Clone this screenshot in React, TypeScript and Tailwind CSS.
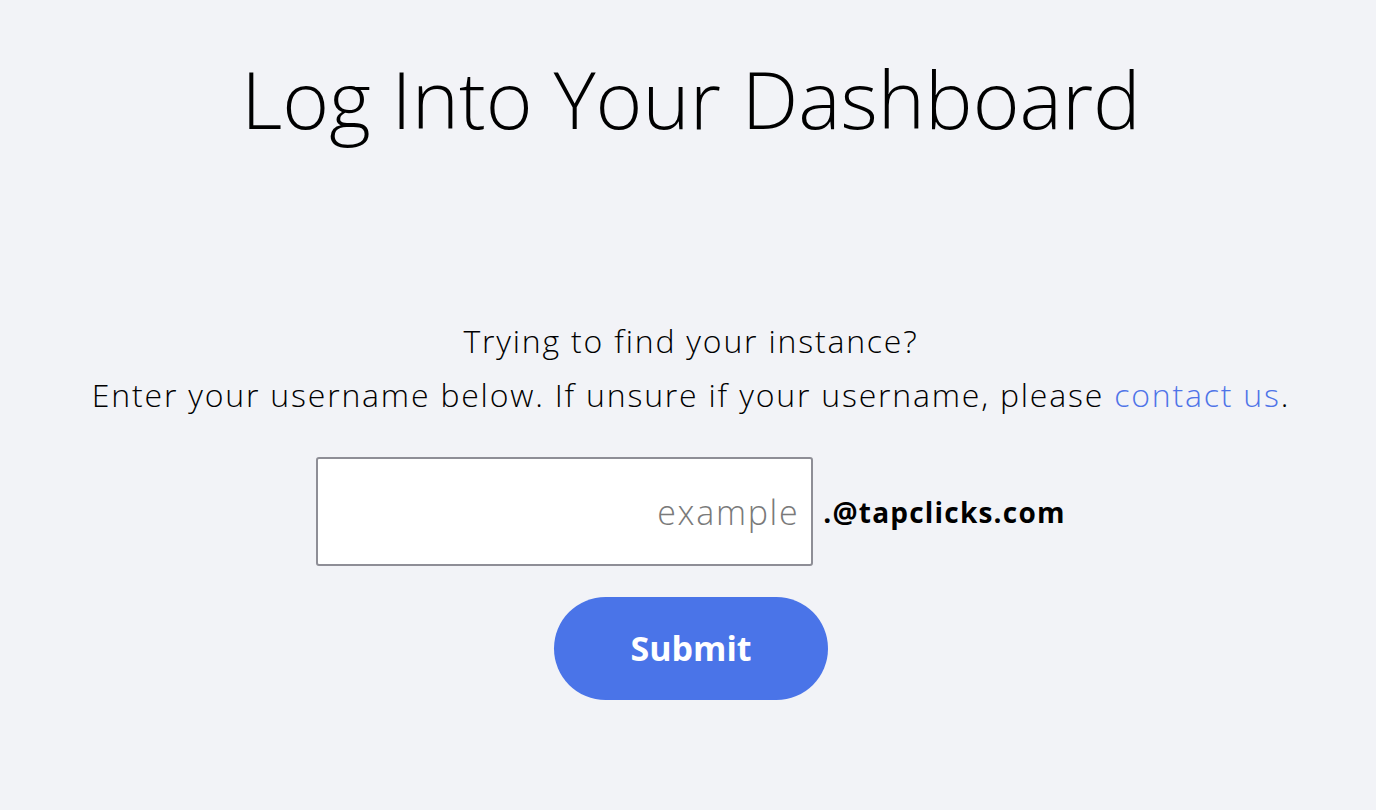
export default function App() {
  return (
    <div className="min-h-[810px] w-full bg-[#f2f3f7] pl-[6px] font-['Open_Sans',_'Noto_Sans',_sans-serif] text-black">
      <div className="flex flex-col items-center">
        <h1 className="mt-[50px] text-[80px] font-light leading-[96px]">Log Into Your Dashboard</h1>

        <div className="mt-[168px] flex flex-col items-center text-[32px] font-light leading-[54px] tracking-[1.8px]">
          <p>Trying to find your instance?</p>
          <p>
            Enter your username below. If unsure if your username, please{" "}
            <a href="#" className="text-[#4f74e8]">
              contact us
            </a>
            .
          </p>
        </div>

        <div className="mt-[35px] flex items-center gap-[10px]">
          <input
            type="text"
            placeholder="example"
            className="h-[109px] w-[497px] rounded-[3px] border-2 border-[#8e8e96] bg-white px-3 text-right text-[34px] font-light tracking-[1.7px] placeholder:text-[#7a7a7a] outline-none"
          />
          <span className="text-[28px] font-bold tracking-[1.2px]">.@tapclicks.com</span>
        </div>

        <button className="mt-[31px] h-[103px] w-[274px] rounded-full bg-[#4a74e8] text-[34px] font-bold text-white">
          Submit
        </button>
      </div>
    </div>
  );
}
